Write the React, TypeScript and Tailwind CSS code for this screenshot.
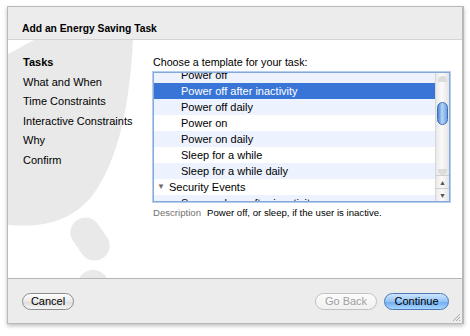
import React from 'react';

const steps = ['Tasks', 'What and When', 'Time Constraints', 'Interactive Constraints', 'Why', 'Confirm'];

interface Row {
  label: string;
  kind: 'item' | 'group';
}

const rows: Row[] = [
  { label: 'Power off', kind: 'item' },
  { label: 'Power off after inactivity', kind: 'item' },
  { label: 'Power off daily', kind: 'item' },
  { label: 'Power on', kind: 'item' },
  { label: 'Power on daily', kind: 'item' },
  { label: 'Sleep for a while', kind: 'item' },
  { label: 'Sleep for a while daily', kind: 'item' },
  { label: 'Security Events', kind: 'group' },
  { label: 'Secure sleep after inactivity', kind: 'item' },
];

function Watermark() {
  return (
    <svg className="absolute left-0 top-0 pointer-events-none" width="140" height="238" viewBox="0 0 140 238">
      <path d="M0 14 L26 0 L125 0 C 122 60, 112 118, 84 156 C 64 180, 38 188, 0 185 Z" fill="#e9e9e9" />
      <g transform="translate(82 199) rotate(-35)">
        <rect x="-15" y="-23" width="30" height="46" rx="15" fill="#e9e9e9" />
      </g>
      <circle cx="85" cy="246" r="16" fill="#e9e9e9" />
    </svg>
  );
}

function Scrollbar() {
  return (
    <div className="w-[14px] shrink-0 flex flex-col border-l border-[#d6d6d6] bg-[linear-gradient(to_right,#e9e9e9,#fafafa_45%,#e4e4e4)]">
      <div className="h-[3px]" />
      <div className="h-[6px] mx-[2px] rounded-t-full bg-[#dcdcdc]" />
      <div className="h-[20px]" />
      <div className="h-[23px] mx-[1px] rounded-full border border-[#3f6fb3] bg-[linear-gradient(to_right,#4d86d3,#b7d6f7_45%,#6aa1e3)]" />
      <div className="flex-1" />
      <div className="h-[6px] mx-[2px] rounded-b-full bg-[#dcdcdc]" />
      <div className="h-[13px] flex items-center justify-center border-t border-[#cfcfcf] text-[7px] leading-none text-[#555]">▲</div>
      <div className="h-[13px] flex items-center justify-center border-t border-[#cfcfcf] text-[7px] leading-none text-[#555]">▼</div>
    </div>
  );
}

export default function App() {
  return (
    <div className="w-[470px] h-[336px] bg-white pt-[6px] pl-[7px] font-['Liberation_Sans',Arial,sans-serif] text-black">
      <div className="w-[457px] h-[318px] flex flex-col border border-[#b9b9b9] border-r-[2px] shadow-[0_2px_4px_rgba(0,0,0,0.25)]">
        <div className="h-[33px] bg-[#ececec] border-b border-[#d4d4d4] flex items-end pb-[3px] pl-[14px]">
          <span className="text-[10.3px] font-bold">Add an Energy Saving Task</span>
        </div>

        <div className="relative flex-1 bg-white flex overflow-hidden">
          <Watermark />
          <div className="relative w-[145px] shrink-0 pl-[15px] pt-[13px] flex flex-col text-[11px] leading-[19.6px]">
            {steps.map((s, i) => (
              <span key={s} className={i === 0 ? 'font-bold' : ''}>
                {s}
              </span>
            ))}
          </div>

          <div className="relative flex flex-col pt-[13px]">
            <span className="text-[10.7px] leading-[18px]">Choose a template for your task:</span>
            <div className="mt-[1px] w-[297px] h-[130px] flex border border-[#86a9d9] shadow-[0_0_0_1px_#b5cdef] bg-white overflow-hidden">
              <div className="flex-1 overflow-hidden">
                <div className="-mt-[6px]">
                  {rows.map((r, i) => {
                    const selected = i === 1;
                    const bg = selected ? 'bg-[#3875d7] text-white' : i % 2 === 0 ? 'bg-[#edf3fe]' : 'bg-white';
                    return (
                      <div key={r.label} className={`h-[16px] flex items-center text-[11px] ${bg}`}>
                        {r.kind === 'group' ? (
                          <>
                            <span className="w-[15px] pl-[3px] text-[8px] text-[#6b6b6b]">▼</span>
                            <span>{r.label}</span>
                          </>
                        ) : (
                          <span className="pl-[27px]">{r.label}</span>
                        )}
                      </div>
                    );
                  })}
                </div>
              </div>
              <Scrollbar />
            </div>
            <div className="mt-[5px] flex items-center gap-[6px] text-[9.6px] leading-[12px]">
              <span className="text-[#727272]">Description</span>
              <span>Power off, or sleep, if the user is inactive.</span>
            </div>
          </div>
        </div>

        <div className="relative h-[45px] bg-[#ececec] border-t border-[#b5b5b5] flex items-center pl-[14px] pr-[13px]">
          <button className="h-[17px] w-[52px] rounded-full border border-[#8c8c8c] bg-[linear-gradient(to_bottom,#ffffff,#e9e9e9_50%,#dcdcdc_51%,#f5f5f5)] text-[11px] leading-none">
            Cancel
          </button>
          <div className="flex-1" />
          <button className="h-[17px] w-[62px] rounded-full border border-[#c2c2c2] bg-[linear-gradient(to_bottom,#fbfbfb,#f1f1f1)] text-[11px] leading-none text-[#a0a0a0]">
            Go Back
          </button>
          <button className="ml-[7px] h-[17px] w-[65px] rounded-full border border-[#4e79b6] bg-[linear-gradient(to_bottom,#cfe5fd,#94c4f6_50%,#6aabf0_51%,#aad6ff)] text-[11px] leading-none">
            Continue
          </button>
          <svg className="absolute right-[1px] bottom-[1px]" width="9" height="9" viewBox="0 0 9 9">
            <path d="M8 1 L1 8 M8 4 L4 8 M8 7 L7 8" stroke="#a8a8a8" strokeWidth="1" />
          </svg>
        </div>
      </div>
    </div>
  );
}
